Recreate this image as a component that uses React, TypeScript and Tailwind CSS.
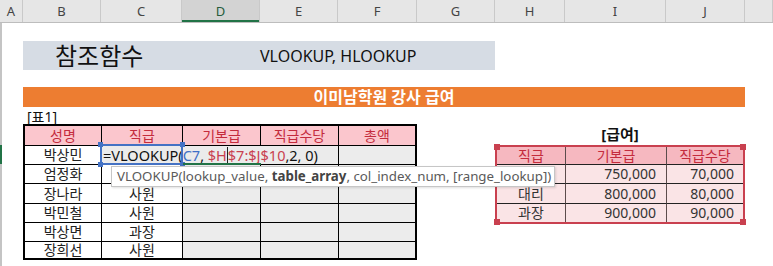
import React from 'react';

/* ─── DATA ─── */

const columns = [
  { label: 'A', w: 'w-[23px]' },
  { label: 'B', w: 'w-[78px]' },
  { label: 'C', w: 'w-[81px]' },
  { label: 'D', w: 'w-[78px]', active: true },
  { label: 'E', w: 'w-[78px]' },
  { label: 'F', w: 'w-[79px]' },
  { label: 'G', w: 'w-[78px]' },
  { label: 'H', w: 'w-[70px]' },
  { label: 'I', w: 'w-[101px]' },
  { label: 'J', w: 'w-[79px]' },
  { label: '', w: 'flex-1' },
];

const staff = [
  { name: '박상민', rank: '' },
  { name: '엄정화', rank: '' },
  { name: '장나라', rank: '사원' },
  { name: '박민철', rank: '사원' },
  { name: '박상면', rank: '과장' },
  { name: '장희선', rank: '사원' },
];

const staffHeads = ['성명', '직급', '기본급', '직급수당', '총액'];

const pay = [
  { rank: '사원', base: '750,000', bonus: '70,000', h: 'h-[19px] border-b' },
  { rank: '대리', base: '800,000', bonus: '80,000', h: 'h-[20px] border-b' },
  { rank: '과장', base: '900,000', bonus: '90,000', h: 'h-[18px]' },
];

/* ─── COLUMN HEADER ─── */

function ColumnHeader() {
  return (
    <div className="flex h-[23px] border-b border-[#bdbdbd] bg-[#e6e6e6] text-[13px] text-[#444]">
      {columns.map((c) => (
        <div
          key={c.label || 'end'}
          className={`${c.w} flex items-center justify-center border-r border-[#c9c9c9] ${
            c.active ? 'bg-[#d3d3d3] text-[#265c3c] shadow-[inset_0_-2px_0_#217346]' : ''
          }`}
        >
          {c.label}
        </div>
      ))}
    </div>
  );
}

/* ─── TABLE 1 ─── */

function StaffTable() {
  return (
    <div className="grid w-[394px] grid-cols-[76px_80px_77px_77px_76px] grid-rows-[19px_18px_18px_19px_18px_18px_16px] gap-px border-2 border-black bg-black text-[14px]">
      {staffHeads.map((h) => (
        <div key={h} className="flex items-center justify-center bg-[#fbc6cd] text-[#c42b3c]">
          {h}
        </div>
      ))}
      {staff.map((s) => (
        <React.Fragment key={s.name}>
          <div className="flex items-center justify-center bg-white text-[#222]">{s.name}</div>
          <div className="flex items-center justify-center bg-white text-[#222]">{s.rank}</div>
          <div className="bg-[#ececec]" />
          <div className="bg-[#ececec]" />
          <div className="bg-[#ececec]" />
        </React.Fragment>
      ))}
    </div>
  );
}

/* ─── PAY TABLE ─── */

function PayTable() {
  return (
    <div className="ml-[78px] w-[250px]">
      <div className="flex h-[21px] items-center justify-center text-[15px] font-bold text-[#111]">[급여]</div>
      <div className="relative border-2 border-[#c9404f] text-[14px]">
        <div className="grid grid-cols-[69px_101px_76px] bg-[#f6b8c0] text-[#c42b3c]">
          <div className="flex h-[18px] items-center justify-center border-b border-r border-b-[#222] border-r-[#5c4c4c]">직급</div>
          <div className="flex h-[18px] items-center justify-center border-b border-r border-b-[#222] border-r-[#5c4c4c]">기본급</div>
          <div className="flex h-[18px] items-center justify-center border-b border-[#222]">직급수당</div>
        </div>
        {pay.map((p) => (
          <div key={p.rank} className="grid grid-cols-[69px_101px_76px] bg-[#fae4e6] text-[#333]">
            <div className={`${p.h} flex items-center justify-center border-r border-r-[#5c4c4c] border-b-[#222]`}>{p.rank}</div>
            <div className={`${p.h} flex items-center justify-end border-r border-r-[#5c4c4c] border-b-[#222] pr-[10px]`}>{p.base}</div>
            <div className={`${p.h} flex items-center justify-end border-b-[#222] pr-[9px]`}>{p.bonus}</div>
          </div>
        ))}
        {/* reference handles */}
        <div className="absolute -left-[3px] -top-[3px] h-[6px] w-[6px] bg-[#c9404f]" />
        <div className="absolute -right-[3px] -top-[3px] h-[6px] w-[6px] bg-[#c9404f]" />
        <div className="absolute -bottom-[3px] -left-[3px] h-[6px] w-[6px] bg-[#c9404f]" />
        <div className="absolute -bottom-[3px] -right-[3px] h-[6px] w-[6px] bg-[#c9404f]" />
      </div>
    </div>
  );
}

/* ─── APP ─── */

export default function App() {
  return (
    <div className="relative h-[266px] w-[773px] overflow-hidden bg-white font-['Noto_Sans','Noto_Sans_CJK_KR',sans-serif] leading-none">
      <ColumnHeader />

      <div className="h-[243px] border-l-2 border-[#c4c4c4] pl-[21px]">
        <div className="h-[18px]" />
        <div className="flex h-[29px] w-[472px] items-center bg-[#d6dce4] text-[#111]">
          <span className="w-[237px] pl-[32px] text-[24px]">참조함수</span>
          <span className="text-[16px]">VLOOKUP, HLOOKUP</span>
        </div>
        <div className="h-[17px]" />
        <div className="flex h-[20px] w-[722px] items-center justify-center bg-[#ed7d31] text-[16px] font-bold text-white">
          이미남학원 강사 급여
        </div>
        <div className="flex h-[17px] items-end pl-[4px] text-[14px] text-[#111]">[표1]</div>
        <div className="flex items-start">
          <StaffTable />
          <PayTable />
        </div>
      </div>

      {/* selected row marker */}
      <div className="absolute left-0 top-[145px] h-[19px] w-[2px] bg-[#217346]" />

      {/* in-cell editor, text cursor sits after $H */}
      <div className="absolute left-[102px] top-[146px] flex h-[18px] w-[236px] items-center whitespace-nowrap bg-[#ebebeb] pl-[1px] text-[14.5px] text-[#111]">
        =VLOOKUP(<span className="text-[#3f6fc6]">C7</span>,&nbsp;
        <span className="flex items-center text-[#c9404f]">
          $H<span className="inline-block h-[16px] w-px bg-[#222]" />$7:$J$10
        </span>
        ,2, 0)
      </div>
      <div className="absolute left-[100px] top-[144px] h-[21px] w-[83px] border-2 border-[#4472c4]" />
      <div className="absolute left-[98px] top-[142px] h-[5px] w-[5px] bg-[#4472c4]" />
      <div className="absolute left-[180px] top-[142px] h-[5px] w-[5px] bg-[#4472c4]" />
      <div className="absolute left-[98px] top-[162px] h-[5px] w-[5px] bg-[#4472c4]" />
      <div className="absolute left-[180px] top-[162px] h-[5px] w-[5px] bg-[#4472c4]" />
      <div className="absolute left-[183px] top-[163px] h-[2px] w-[78px] bg-[#217346]" />

      {/* function tooltip */}
      <div className="absolute left-[111px] top-[166px] flex h-[21px] w-[444px] items-center whitespace-nowrap border border-[#c6c6c6] bg-white pl-[5px] text-[13.3px] text-[#5a5a5a] shadow-[1px_1px_2px_rgba(0,0,0,0.12)]">
        VLOOKUP(lookup_value,&nbsp;<span className="font-bold text-[#444]">table_array</span>, col_index_num, [range_lookup])
      </div>
    </div>
  );
}
